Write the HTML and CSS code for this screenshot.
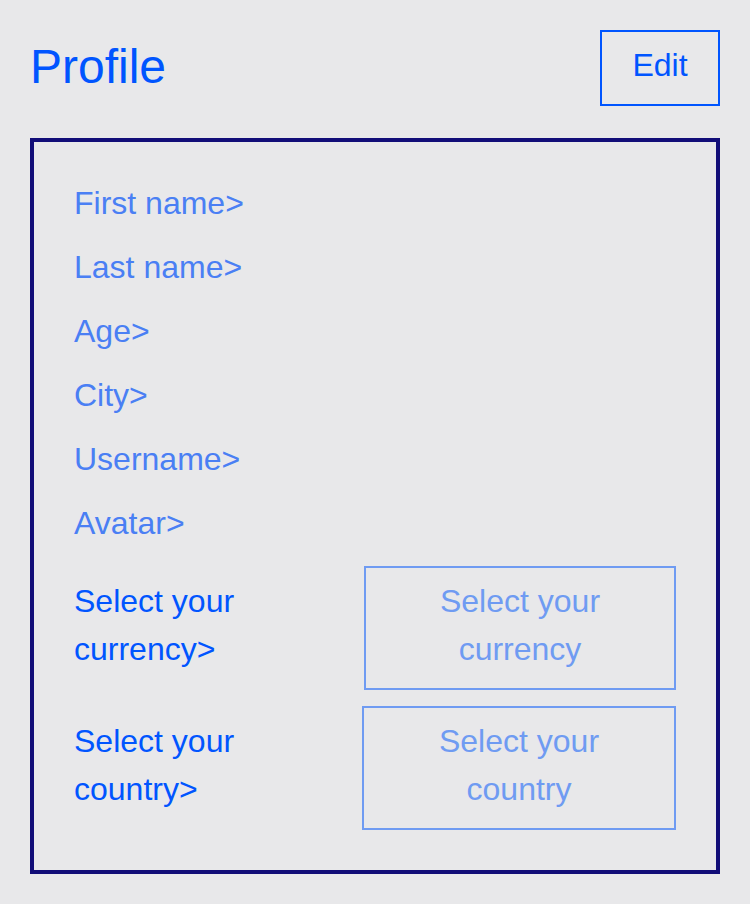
FILE: index.html
```html
<!DOCTYPE html>
<html lang="en">
<head>
<meta charset="utf-8">
<title>Profile</title>
<link rel="stylesheet" href="styles.css">
</head>
<body>
<div class="page">
  <header class="header">
    <h1 class="title">Profile</h1>
    <button class="edit-btn">Edit</button>
  </header>
  <section class="card">
    <div class="field">First name&gt;</div>
    <div class="field">Last name&gt;</div>
    <div class="field">Age&gt;</div>
    <div class="field">City&gt;</div>
    <div class="field">Username&gt;</div>
    <div class="field field-last">Avatar&gt;</div>
    <div class="select-row">
      <div class="select-label">Select your<br>currency&gt;</div>
      <div class="select-box box-currency">Select your<br>currency</div>
    </div>
    <div class="select-row">
      <div class="select-label">Select your<br>country&gt;</div>
      <div class="select-box box-country">Select your<br>country</div>
    </div>
  </section>
</div>
</body>
</html>
```

FILE: styles.css
```css
* { box-sizing: border-box; }

html, body {
  margin: 0;
  padding: 0;
  background: #e8e8ea;
}

body {
  font-family: "Liberation Sans", Arial, sans-serif;
}

.page {
  padding: 30px 30px 0 30px;
}

.header {
  display: flex;
  justify-content: space-between;
  align-items: center;
  height: 76px;
}

.title {
  margin: 0;
  font-size: 48px;
  font-weight: normal;
  line-height: 55px;
  color: #0055ff;
  position: relative;
  top: -2px;
}

.edit-btn {
  width: 120px;
  height: 76px;
  border: 2px solid #0055ff;
  background: transparent;
  color: #0055ff;
  font-family: "Liberation Sans", Arial, sans-serif;
  font-size: 32px;
  line-height: 36.8px;
  padding: 15px 0 20px 0;
  text-align: center;
}

.card {
  margin-top: 32px;
  border: 4px solid #110d78;
  padding: 41px 40px 40px 40px;
}

.field {
  font-size: 32px;
  line-height: 40px;
  color: #4a7ff4;
  margin-bottom: 24px;
}

.field-last {
  margin-bottom: 23px;
}

.select-row {
  display: flex;
  justify-content: space-between;
  align-items: center;
}

.select-row + .select-row {
  margin-top: 16px;
}

.select-label {
  font-size: 32px;
  line-height: 48px;
  color: #0055ff;
  position: relative;
  top: -3px;
}

.select-box {
  border: 2px solid #6f9bf2;
  font-size: 32px;
  line-height: 48px;
  color: #6f9bf2;
  text-align: center;
  padding: 9px 0 15px 0;
}

.box-currency { width: 312px; }
.box-country { width: 314px; }
```
